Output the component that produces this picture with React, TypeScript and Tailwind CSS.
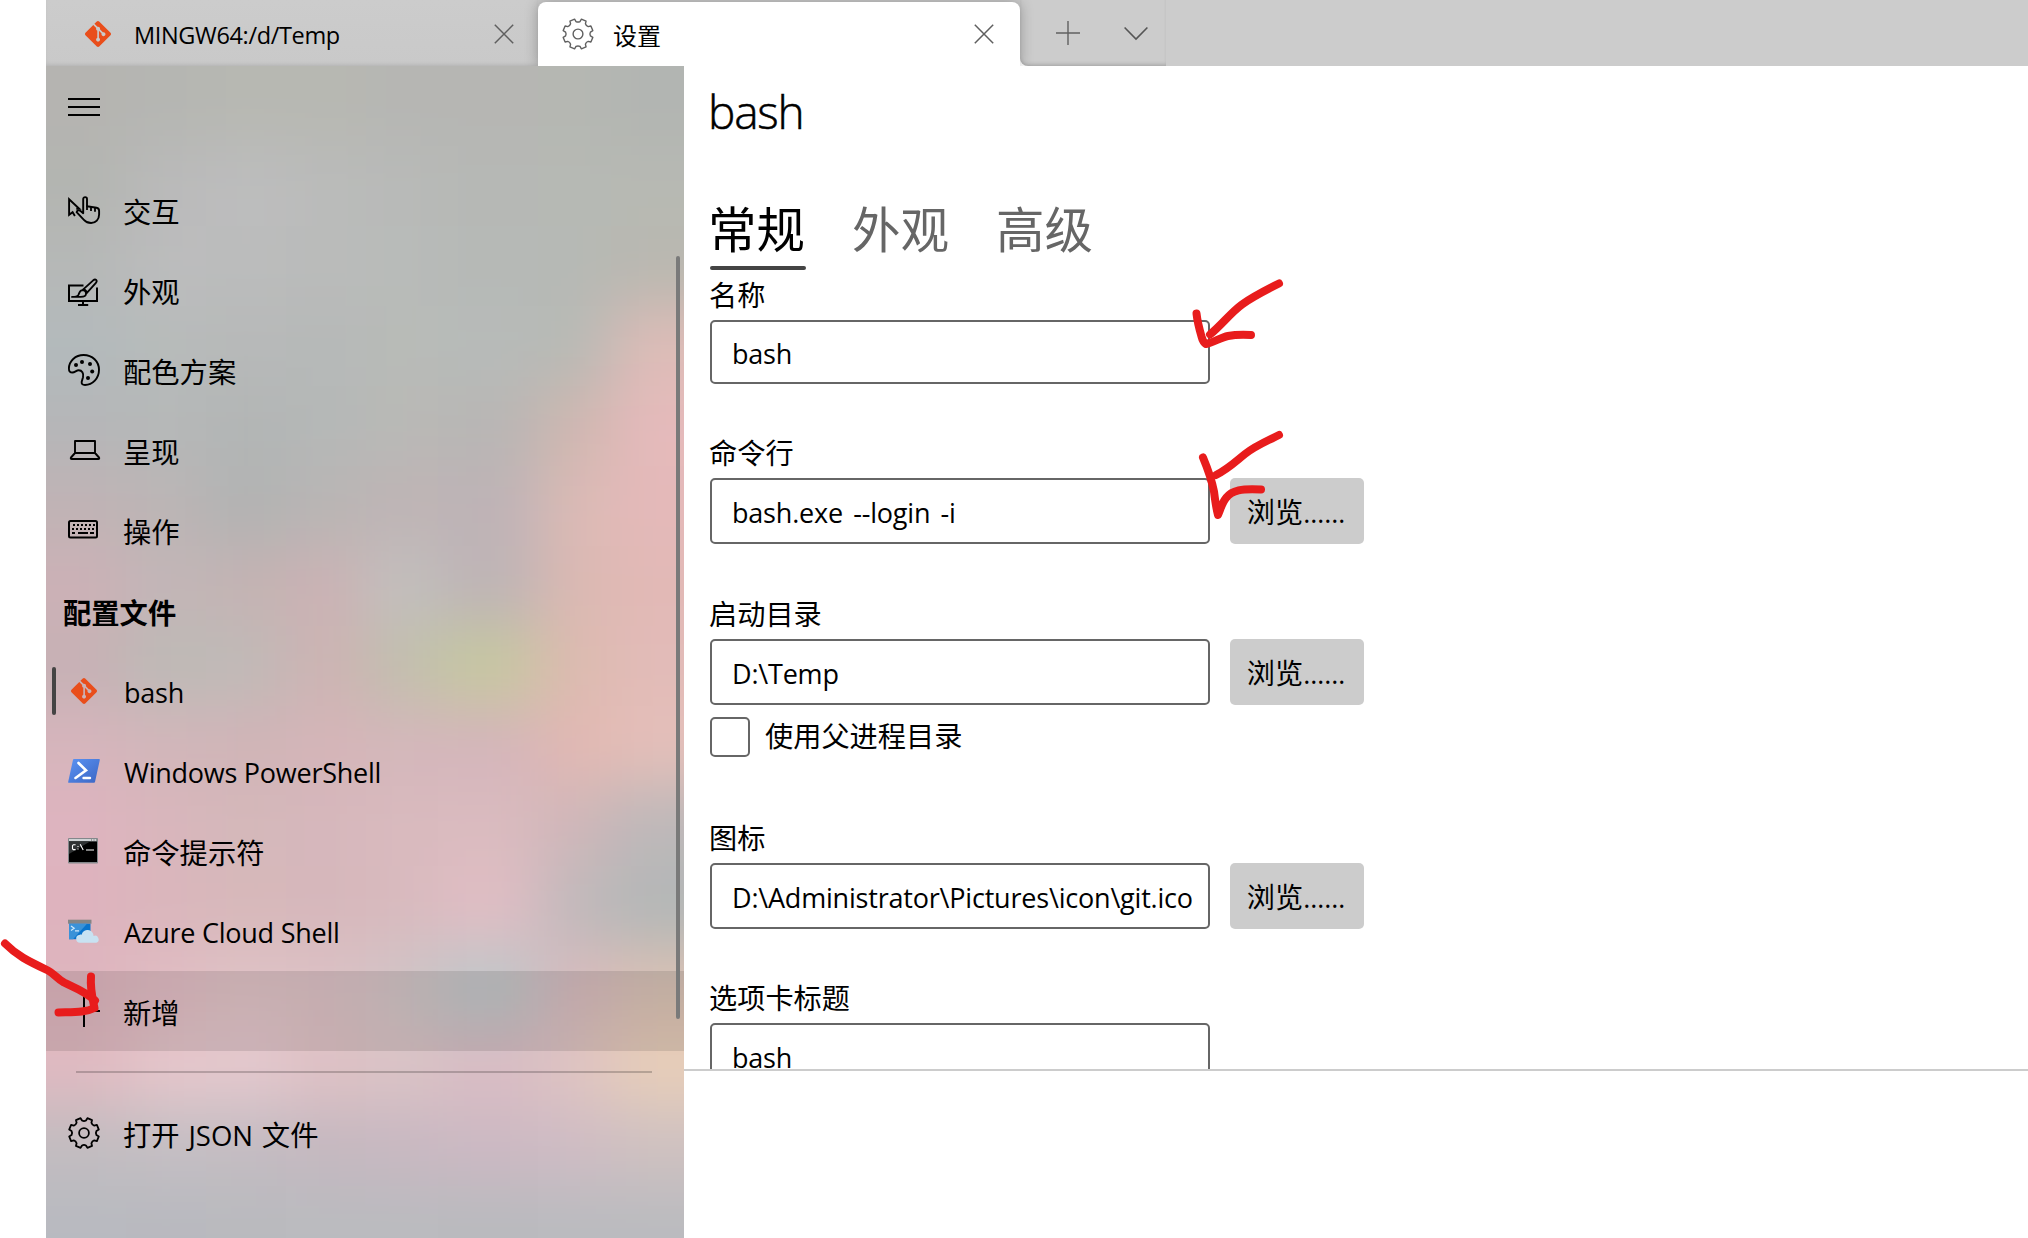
import type { ReactNode } from "react";

/* ---------- Acrylic sidebar backdrop ---------- */

const ACRYLIC: string[][] = [
  ["b5b4b1", "b5b6b2", "b7b8b2", "b7b8b2", "b6b6b3", "b6b6b3", "b5b7b2", "b2b5b2"],
  ["b3b5b1", "bababa", "bdbdbe", "babbba", "b8bab8", "b6b8b5", "b6b9b4", "b7b9b3"],
  ["b6b8b7", "bcbcbd", "bbbcbc", "babbba", "b8bbb9", "b6b9b6", "b6b9b5", "b9b8b0"],
  ["b3babc", "b7bbba", "b7b9b9", "b6b9b8", "b8bbb7", "b7bbb9", "b7b9b4", "ddbcb7"],
  ["b5b6b8", "b5b8b8", "b2b5b5", "b5b8b7", "b9b9b6", "b8b6b4", "cfb7b0", "e5babb"],
  ["c0b3b5", "bcb5b5", "b1b3b3", "b9b5b4", "bfb4b5", "beb3b6", "dbbab5", "e4b9b9"],
  ["ccb1b6", "c2b6b7", "c4b3b3", "cbb2b4", "c2c0be", "beb4b6", "dbb9b2", "e2b9b6"],
  ["c6b1b5", "bdbab6", "c0bab7", "cdb3b3", "c1bfae", "c6c8a0", "dcbab0", "e2bbb8"],
  ["d6b5bc", "d2b6ba", "d0b4b7", "d5b5b8", "d4b7bb", "d4b5bb", "e2b8b2", "e4bfb9"],
  ["deb4bf", "d9b6bc", "d4b8ba", "d6b7bc", "d9babe", "dabbbf", "cfb6b9", "bdb8b9"],
  ["deb3be", "dab6bc", "d7b8ba", "d6b7bb", "d8babe", "e0bdc4", "c0b9bb", "b3b7b7"],
  ["deb5be", "e0bcc3", "dfc3c6", "dcc1c5", "d1c4c6", "bfc7c9", "d8babe", "d9c1b4"],
  ["e0bac1", "e6c6cb", "e5c9ce", "dfc1c5", "dbc4c6", "dabcc4", "dfc4c2", "e8ceb9"],
  ["c2bcc0", "c4bfc3", "c4bcc2", "c5b8c0", "c8b8c1", "ccb9c3", "cfbcc4", "cfc1c1"],
  ["b8bac0", "b8b9bf", "b9babe", "babbbf", "babbbf", "b9babe", "babbbf", "babbbf"],
];
const COLUMN_EDGES = [-100, 80, 160, 240, 320, 392, 492, 565, 740];

function Acrylic() {
  const rows = ACRYLIC.length;
  return (
    <svg className="absolute inset-0" width="638" height="1172" viewBox="0 0 638 1172" aria-hidden="true">
      <defs>
        <filter id="soft" filterUnits="userSpaceOnUse" x="-100" y="-100" width="840" height="1400" colorInterpolationFilters="sRGB">
          <feGaussianBlur stdDeviation="30" />
        </filter>
      </defs>
      <g filter="url(#soft)">
        {ACRYLIC.map((row, r) =>
          row.map((c, i) => {
            const x0 = COLUMN_EDGES[i];
            const x1 = COLUMN_EDGES[i + 1] + 1;
            const y0 = r === 0 ? -100 : r * 80;
            const y1 = r === rows - 1 ? 1300 : (r + 1) * 80 + 1;
            return <rect key={`${r}-${i}`} x={x0} y={y0} width={x1 - x0} height={y1 - y0} fill={`#${c}`} />;
          })
        )}
      </g>
    </svg>
  );
}

/* ---------- Icons ---------- */

function gearPath() {
  const p = (r: number, deg: number) => {
    const a = (deg * Math.PI) / 180;
    return `${(16 + r * Math.sin(a)).toFixed(2)} ${(16 - r * Math.cos(a)).toFixed(2)}`;
  };
  let d = "";
  for (let k = 0; k < 8; k++) {
    const v = k * 45;
    d += `${k === 0 ? "M" : "L"}${p(15.2, v - 13)} L${p(12.6, v - 9)} Q${p(11.4, v)} ${p(12.6, v + 9)} L${p(15.2, v + 13)} `;
  }
  return d + "Z";
}
const GEAR = gearPath();

function GearIcon({ color, width }: { color: string; width: number }) {
  return (
    <svg width="32" height="32" viewBox="0 0 32 32" fill="none" stroke={color} strokeWidth={width} strokeLinejoin="round">
      <path d={GEAR} />
      <circle cx="16" cy="16" r="4.9" />
    </svg>
  );
}

function GitIcon() {
  return (
    <svg width="26" height="26" viewBox="0 0 24 24" fill="#e94e1b">
      <path d="M23.546 10.93L13.067.452c-.604-.603-1.582-.603-2.188 0L8.708 2.627l2.76 2.76c.645-.215 1.379-.07 1.889.441.516.515.658 1.258.438 1.9l2.658 2.66c.645-.223 1.387-.078 1.9.435.721.72.721 1.884 0 2.604-.719.719-1.881.719-2.6 0-.539-.541-.674-1.337-.404-1.996L12.86 8.955v6.525c.176.086.342.203.488.348.713.721.713 1.883 0 2.6-.719.721-1.889.721-2.609 0-.719-.719-.719-1.879 0-2.598.182-.18.387-.316.605-.406V8.835c-.217-.091-.424-.222-.6-.401-.545-.545-.676-1.342-.396-2.009L7.636 3.7.45 10.881c-.6.605-.6 1.584 0 2.189l10.48 10.477c.604.604 1.582.604 2.186 0l10.43-10.43c.605-.603.605-1.582 0-2.187" />
    </svg>
  );
}

function Line({ children }: { children: ReactNode }) {
  return (
    <svg className="overflow-visible" width="32" height="32" viewBox="0 0 32 32" fill="none" stroke="#000" strokeWidth="2">
      {children}
    </svg>
  );
}

const InteractionIcon = () => (
  <Line>
    <path strokeWidth="1.9" d="M6.9 21 4.600 17.200 1.100 19.800V4.200L11.300 13.700H8.300" />
    <path
      strokeWidth="1.9"
      strokeLinejoin="round"
      d="M15.200 18.200V4a1.900 1.900 0 0 1 3.800 0v7.300l9.500 1.500c1.700.3 2.600 1.300 2.600 3v3.600c0 5-3.400 8.600-8 8.600-3.200 0-5.200-1-7.200-3.200l-7.300-7.600c.6-1.900 2.300-2.400 3.900-1.200z"
    />
    <path strokeWidth="1.800" d="M19 10.500v4.500M23 12v4M27 12.800v4" />
  </Line>
);

const AppearanceIcon = () => (
  <Line>
    <path d="M15.500 10.500H1V26h28V12.500M15 26v4M10 30h10.200" />
    <path
      strokeWidth="1.800"
      strokeLinejoin="round"
      d="m14.400 15.200 10.800-9.900c2.400-2 4.600.3 2.700 2.500L18 18.800M14.400 15.200c-3 .2-3 3-4 4.700-1 1.600-3 2-6.400 2h8.600c3.200 0 5.400-.6 5.400-3.100 0-1.800-1.600-3.600-3.600-3.600zm1.600-1.200 3.200 3.200"
    />
  </Line>
);

const PaletteIcon = () => (
  <Line>
    <path
      strokeWidth="1.900"
      d="M15.600 0C24.400 0 31 6.500 31 14.800 31 23.500 24.500 30 17 30c-2.600 0-3.700-1.200-3.300-3.200l1.300-4.600c.9-3.900-1-7-4.300-7-2.300 0-3.900 2.300-6.200 2.300C2 17.500.9 16.200.9 13.600.9 6 7.500 0 15.600 0z"
    />
    <g fill="#000" stroke="none">
      <circle cx="8" cy="10" r="2" />
      <circle cx="14" cy="7" r="2" />
      <circle cx="22" cy="9" r="2" />
      <circle cx="24.200" cy="16.600" r="2" />
      <circle cx="20" cy="23" r="2" />
    </g>
  </Line>
);

const LaptopIcon = () => (
  <Line>
    <path strokeWidth="1.900" strokeLinejoin="round" d="M7 18V6h20v12zM7 18l-4 4.500c-.5.900-.2 1.500.7 1.500h26.600c.9 0 1.200-.6.700-1.500L27 18" />
  </Line>
);

const KeyboardIcon = () => (
  <Line>
    <rect x="1" y="6" width="28" height="16.500" rx="1.500" />
    <path strokeDasharray="2 2" d="M5 10h22" />
    <path strokeDasharray="2 2" d="M4 14h22" />
    <path d="M4 18h3M10 18h10M22 18h4" />
  </Line>
);

const PowerShellIcon = () => (
  <svg width="32" height="32" viewBox="0 0 32 32">
    <defs>
      <linearGradient id="ps" x1="0" y1="0" x2="1" y2="1">
        <stop offset="0" stopColor="#5b93f3" />
        <stop offset="1" stopColor="#3b66c4" />
      </linearGradient>
    </defs>
    <path d="M6 4h25a.8.800 0 0 1 .8 1L27 27a1.200 1.200 0 0 1-1 .8H1a.8.800 0 0 1-.8-1L5 4.800A1.100 1.100 0 0 1 6 4z" fill="url(#ps)" />
    <path d="M10.500 8 18 15.400 7.500 23" fill="none" stroke="#fff" strokeWidth="2.600" strokeLinecap="round" />
    <path d="M15.500 23h6.500" stroke="#fff" strokeWidth="2.400" strokeLinecap="round" />
  </svg>
);

const CmdIcon = () => (
  <svg width="32" height="32" viewBox="0 0 32 32">
    <rect x="0" y="3" width="30" height="25.500" rx="1" fill="#83888b" />
    <rect x="1" y="4" width="28" height="2" fill="#cfd3d5" />
    <path d="M23 5h1M25.500 5h1M28 5h1" stroke="#555" />
    <rect x="1" y="6.500" width="28" height="20.500" fill="#000" />
    <path d="M1 6.500h21L1 19z" fill="#2f3233" />
    <path d="M7.600 9.800H5.300l-.8.900v3l.8.900h2.300M10 11v1M10 13.500v1M12.200 9.300l3 5.700M18 15h8" fill="none" stroke="#fff" strokeWidth="1.100" />
  </svg>
);

const AzureIcon = () => (
  <svg width="32" height="32" viewBox="0 0 32 32">
    <rect x="0" y="4.700" width="23.500" height="4" fill="#858585" />
    <rect x="1" y="8.700" width="21.500" height="15.500" fill="#0a74cc" />
    <path d="M1 8.700h18L5 24.200H1z" fill="#3a92d8" />
    <path d="m3 11 3.200 2.300L3 15.600M7 15.800h4" fill="none" stroke="#cfe8fa" strokeWidth="1.200" />
    <path d="M12.500 27.700a4 4 0 0 1-.6-8c.6-.2 1.300-.1 1.800 0a6 6 0 0 1 11.300-1.200c.4 1 .5 1.600.5 2.500a3.600 3.600 0 1 1 2.900 6.700z" fill="#c8e2f2" />
  </svg>
);

const PlusIcon = () => (
  <Line>
    <path d="M16 0v32M0 16h32" />
  </Line>
);

function CloseIcon() {
  return (
    <svg width="20" height="20" viewBox="0 0 20 20" fill="none" stroke="#5f5f5f" strokeWidth="1.500">
      <path d="m.8.800 18.400 18.400M19.200.800.800 19.200" />
    </svg>
  );
}

/* ---------- Title bar ---------- */

function TabStrip() {
  return (
    <header className="flex h-[66px] shrink-0 overflow-hidden bg-[#cccccc]">
      <div className="flex h-full w-[492px] items-center bg-gradient-to-b from-[#cccccc] to-[#c9c9c9] pt-[2px] shadow-[inset_0_-3px_4px_-2px_rgba(0,0,0,0.12)]">
        <span className="ml-[39px]">
          <GitIcon />
        </span>
        <span className="ml-[23px] w-[360px] pt-[4px] text-[23.5px] leading-none tracking-[-0.35px]">MINGW64:/d/Temp</span>
        <CloseIcon />
      </div>
      <div className="relative mt-[2px] flex h-16 w-[482px] shrink-0 items-center rounded-t-lg bg-white shadow-[0_0_14px_rgba(0,0,0,0.28)]">
        <span className="ml-6">
          <GearIcon color="#5f5f5f" width={1.4} />
        </span>
        <span className="ml-[19px] w-[361px] pt-[3px] text-[24px] leading-none">设置</span>
        <CloseIcon />
      </div>
      <div className="h-full w-[146px] bg-white">
        <div className="flex h-full w-full items-center rounded-bl-lg bg-[#cccccc] shadow-[inset_0_-3px_4px_-2px_rgba(0,0,0,0.22)]">
          <svg className="ml-9" width="24" height="24" viewBox="0 0 24 24" stroke="#606060" strokeWidth="1.400">
            <path d="M12 0v24M0 12h24" />
          </svg>
          <svg className="ml-11" width="24" height="24" viewBox="0 0 24 24" fill="none" stroke="#555" strokeWidth="1.600">
            <path d="m.6 6.500 11.400 11.500L23.400 6.500" />
          </svg>
        </div>
      </div>
    </header>
  );
}

/* ---------- Sidebar ---------- */

interface NavItemProps {
  icon: ReactNode;
  children: ReactNode;
  active?: boolean;
  hover?: boolean;
  low?: boolean;
}

function NavItem({ icon, children, active, hover, low }: NavItemProps) {
  return (
    <li className={`flex h-20 items-center ${hover ? "bg-black/10" : ""}`}>
      <span className={`ml-[6px] h-12 w-1 rounded-full ${active ? "bg-[#444444]" : ""}`} />
      <span className="ml-3 flex w-8 justify-center">{icon}</span>
      <span className={`ml-[23px] whitespace-pre leading-none ${low ? "pt-[4px]" : "pt-[2px]"}`}>{children}</span>
    </li>
  );
}

function Latin({ children }: { children: ReactNode }) {
  return <span className="ml-px text-[27px] tracking-[-0.25px]">{children}</span>;
}

function Sidebar() {
  return (
    <nav className="relative h-full w-[638px] shrink-0 overflow-hidden text-[28.3px]">
      <Acrylic />
      <div className="relative flex h-full flex-col">
        <div className="flex h-[105px] flex-col gap-[6px] pl-[22px] pt-8">
          <span className="h-[2px] w-8 bg-black" />
          <span className="h-[2px] w-8 bg-black" />
          <span className="h-[2px] w-8 bg-black" />
        </div>
        <ul>
          <NavItem icon={<InteractionIcon />}>交互</NavItem>
          <NavItem icon={<AppearanceIcon />}>外观</NavItem>
          <NavItem icon={<PaletteIcon />}>配色方案</NavItem>
          <NavItem icon={<LaptopIcon />}>呈现</NavItem>
          <NavItem icon={<KeyboardIcon />}>操作</NavItem>
          <li className="flex h-20 items-center pl-[17px] pt-1 font-bold leading-none">配置文件</li>
          <NavItem icon={<GitIcon />} active>
            <Latin>bash</Latin>
          </NavItem>
          <NavItem icon={<PowerShellIcon />}>
            <Latin>Windows PowerShell</Latin>
          </NavItem>
          <NavItem icon={<CmdIcon />} low>
            命令提示符
          </NavItem>
          <NavItem icon={<AzureIcon />}>
            <Latin>Azure Cloud Shell</Latin>
          </NavItem>
          <NavItem icon={<PlusIcon />} hover low>
            新增
          </NavItem>
        </ul>
        <hr className="mb-5 ml-[30px] mt-5 w-[576px] border-0 border-t-2 border-black/20" />
        <ul>
          <NavItem icon={<GearIcon color="#000" width={1.8} />} low>
            <span className="[word-spacing:1.5px]">
              打开 <span className="text-[27.5px]">JSON</span> 文件
            </span>
          </NavItem>
        </ul>
      </div>
      <span className="absolute right-1 top-[190px] h-[763px] w-1 rounded-full bg-[#7a7a7a]" />
    </nav>
  );
}

/* ---------- Settings form ---------- */

function Label({ children }: { children: ReactNode }) {
  return <div className="-ml-px flex h-10 items-start pt-px leading-none">{children}</div>;
}

function Field({ value, browse, height = "h-[66px]" }: { value: string; browse?: boolean; height?: string }) {
  return (
    <div className={`flex gap-5 ${height}`}>
      <div className="flex w-[500px] items-center whitespace-pre rounded-[5px] border-2 border-[#666666] pl-5 pt-[2px] text-[27px] leading-none tracking-[-0.2px] [word-spacing:3.5px]">
        {value}
      </div>
      {browse && (
        <button className="flex w-[134px] items-center justify-center rounded-[5px] bg-[#cccccc] pr-[2px] pt-[2px] leading-none">
          浏览<span className="text-[27px]">……</span>
        </button>
      )}
    </div>
  );
}

function Settings() {
  return (
    <main className="flex-1 bg-white">
      <div className="h-[1005px] overflow-hidden border-b-2 border-[#cccccc] pl-[26px] text-[28.2px]">
        <div className="h-[1200px]">
          <h1 className="-ml-[2px] flex h-[92px] items-center pb-[3px] text-[46px] font-light leading-none tracking-[-1.2px] [-webkit-text-stroke:0.5px_#000]">
            bash
          </h1>
          <div className="flex h-[112px] items-end gap-12 text-[48.5px] leading-none text-[#666666]">
            <span className="flex h-[65px] w-24 flex-col justify-between whitespace-nowrap text-black">
              <span className="-ml-[2px]">常规</span>
              <span className="h-1 w-24 rounded-full bg-[#444444]" />
            </span>
            <span className="-ml-[2px] h-[65px]">外观</span>
            <span className="-ml-px h-[65px]">高级</span>
          </div>
          <div className="pt-[10px]">
            <Label>名称</Label>
            <Field value="bash" height="h-16" />
          </div>
          <div className="pt-[54px]">
            <Label>命令行</Label>
            <Field value="bash.exe --login -i" browse />
          </div>
          <div className="pt-[55px]">
            <Label>启动目录</Label>
            <Field value="D:\Temp" browse />
            <div className="flex items-center gap-[15px] pt-3">
              <span className="size-10 rounded-[5px] border-2 border-[#666666]" />
              <span className="-mt-[2px] leading-none">使用父进程目录</span>
            </div>
          </div>
          <div className="pt-[66px]">
            <Label>图标</Label>
            <Field value="D:\Administrator\Pictures\icon\git.ico" browse />
          </div>
          <div className="pt-[54px]">
            <Label>选项卡标题</Label>
            <Field value="bash" />
          </div>
        </div>
      </div>
    </main>
  );
}

/* ---------- Hand-drawn pointers ---------- */

function Arrows() {
  return (
    <svg
      className="pointer-events-none absolute inset-0"
      width="2028"
      height="1238"
      viewBox="0 0 2028 1238"
      fill="none"
      stroke="#e81c1c"
      strokeWidth="8"
      strokeLinecap="round"
      strokeLinejoin="round"
    >
      <path d="M1279 283.500c-14 7-26 13-37 21-11 8-20 20-32 30" />
      <path d="M1196.500 313.500c1 9 3 16 5 23 1 4 2 6 4.500 7.500 8-2 15-6.500 22-8 8-1.500 14-1.500 23-1" />
      <path d="M1279 435c-12 6-24 11-34 19-10 8-17 15-29 21" />
      <path d="M1203 457.500c5 12 9 24 11 34 1 8 2 16 4 23.500 3-7 4-12 8-17 6-8 16-9.500 35-8.500" />
      <path d="M5 943.500c12 12 22 17 43 27 6 3 9 8 16 12 10 5 20 8 31 18" />
      <path d="M91 976.500c-1 12 1 20 3.500 31.500-9 4.500-20 4-36 4.500" />
    </svg>
  );
}

export default function App() {
  return (
    <div className="relative flex h-[1238px] w-[2028px] flex-col overflow-hidden bg-white pl-[46px] font-['Open_Sans','Noto_Sans_CJK_SC',sans-serif] text-black">
      <TabStrip />
      <div className="flex min-h-0 flex-1">
        <Sidebar />
        <Settings />
      </div>
      <Arrows />
    </div>
  );
}
